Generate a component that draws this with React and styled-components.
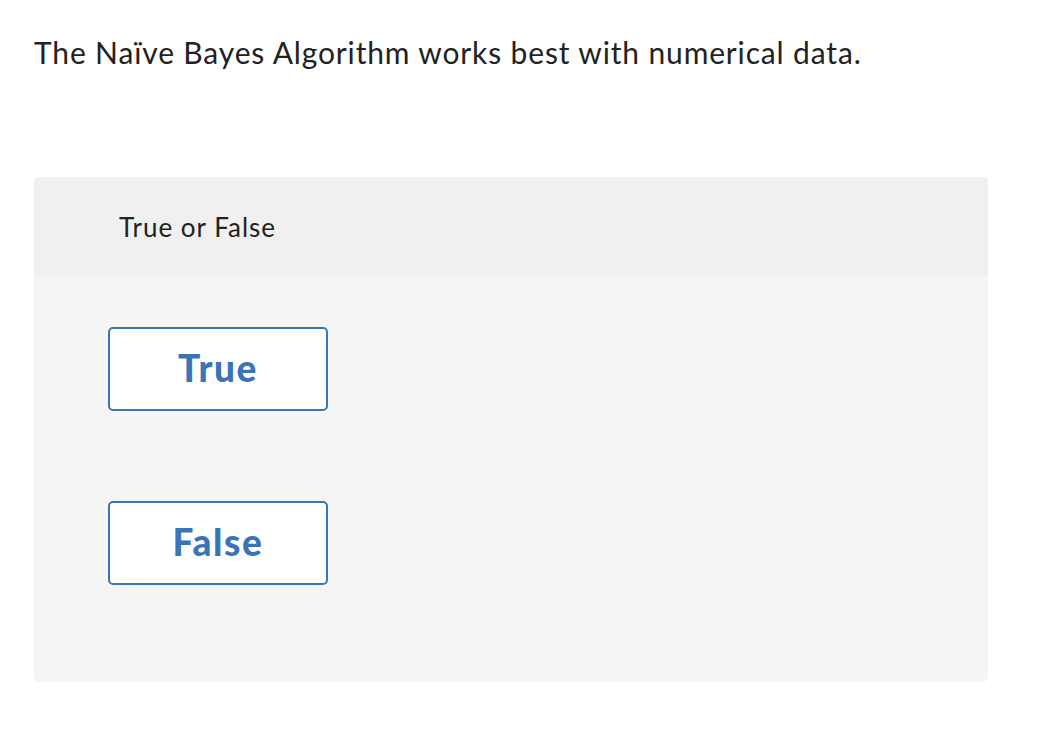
import React from 'react';
import styled, { createGlobalStyle } from 'styled-components';

const GlobalStyle = createGlobalStyle`
  body {
    margin: 0;
    background: #fff;
    font-family: "Lato", "Open Sans", sans-serif;
    color: #222;
  }
`;

const Page = styled.div`
  padding: 31px 34px 0 34px;
  width: 954px;
`;

const Question = styled.p`
  margin: 0;
  font-size: 30px;
  line-height: 42px;
  letter-spacing: 0.85px;
  color: #222;
`;

const Panel = styled.div`
  margin-top: 104px;
  background: #f5f5f5;
  border-radius: 5px;
  overflow: hidden;
  height: 505px;
`;

const Header = styled.div`
  height: 100px;
  background: #f0f0f0;
  display: flex;
  align-items: center;
  padding-left: 85px;
  font-size: 26px;
  letter-spacing: 1px;
  color: #222;
`;

const Options = styled.div`
  display: flex;
  flex-direction: column;
  gap: 90px;
  padding: 50px 0 0 74px;
`;

const Choice = styled.button`
  width: 220px;
  height: 84px;
  box-sizing: border-box;
  background: #fff;
  border: 2px solid #3b76b7;
  border-radius: 5px;
  color: #3a74b6;
  font-family: "Lato", sans-serif;
  font-weight: 900;
  font-size: 37px;
  letter-spacing: 1.6px;
  padding: 0 0 3px 0;
  cursor: pointer;
`;

export default function App() {
  return (
    <>
      <GlobalStyle />
      <Page>
        <Question>The Naïve Bayes Algorithm works best with numerical data.</Question>
        <Panel>
          <Header>True or False</Header>
          <Options>
            <Choice>True</Choice>
            <Choice>False</Choice>
          </Options>
        </Panel>
      </Page>
    </>
  );
}
